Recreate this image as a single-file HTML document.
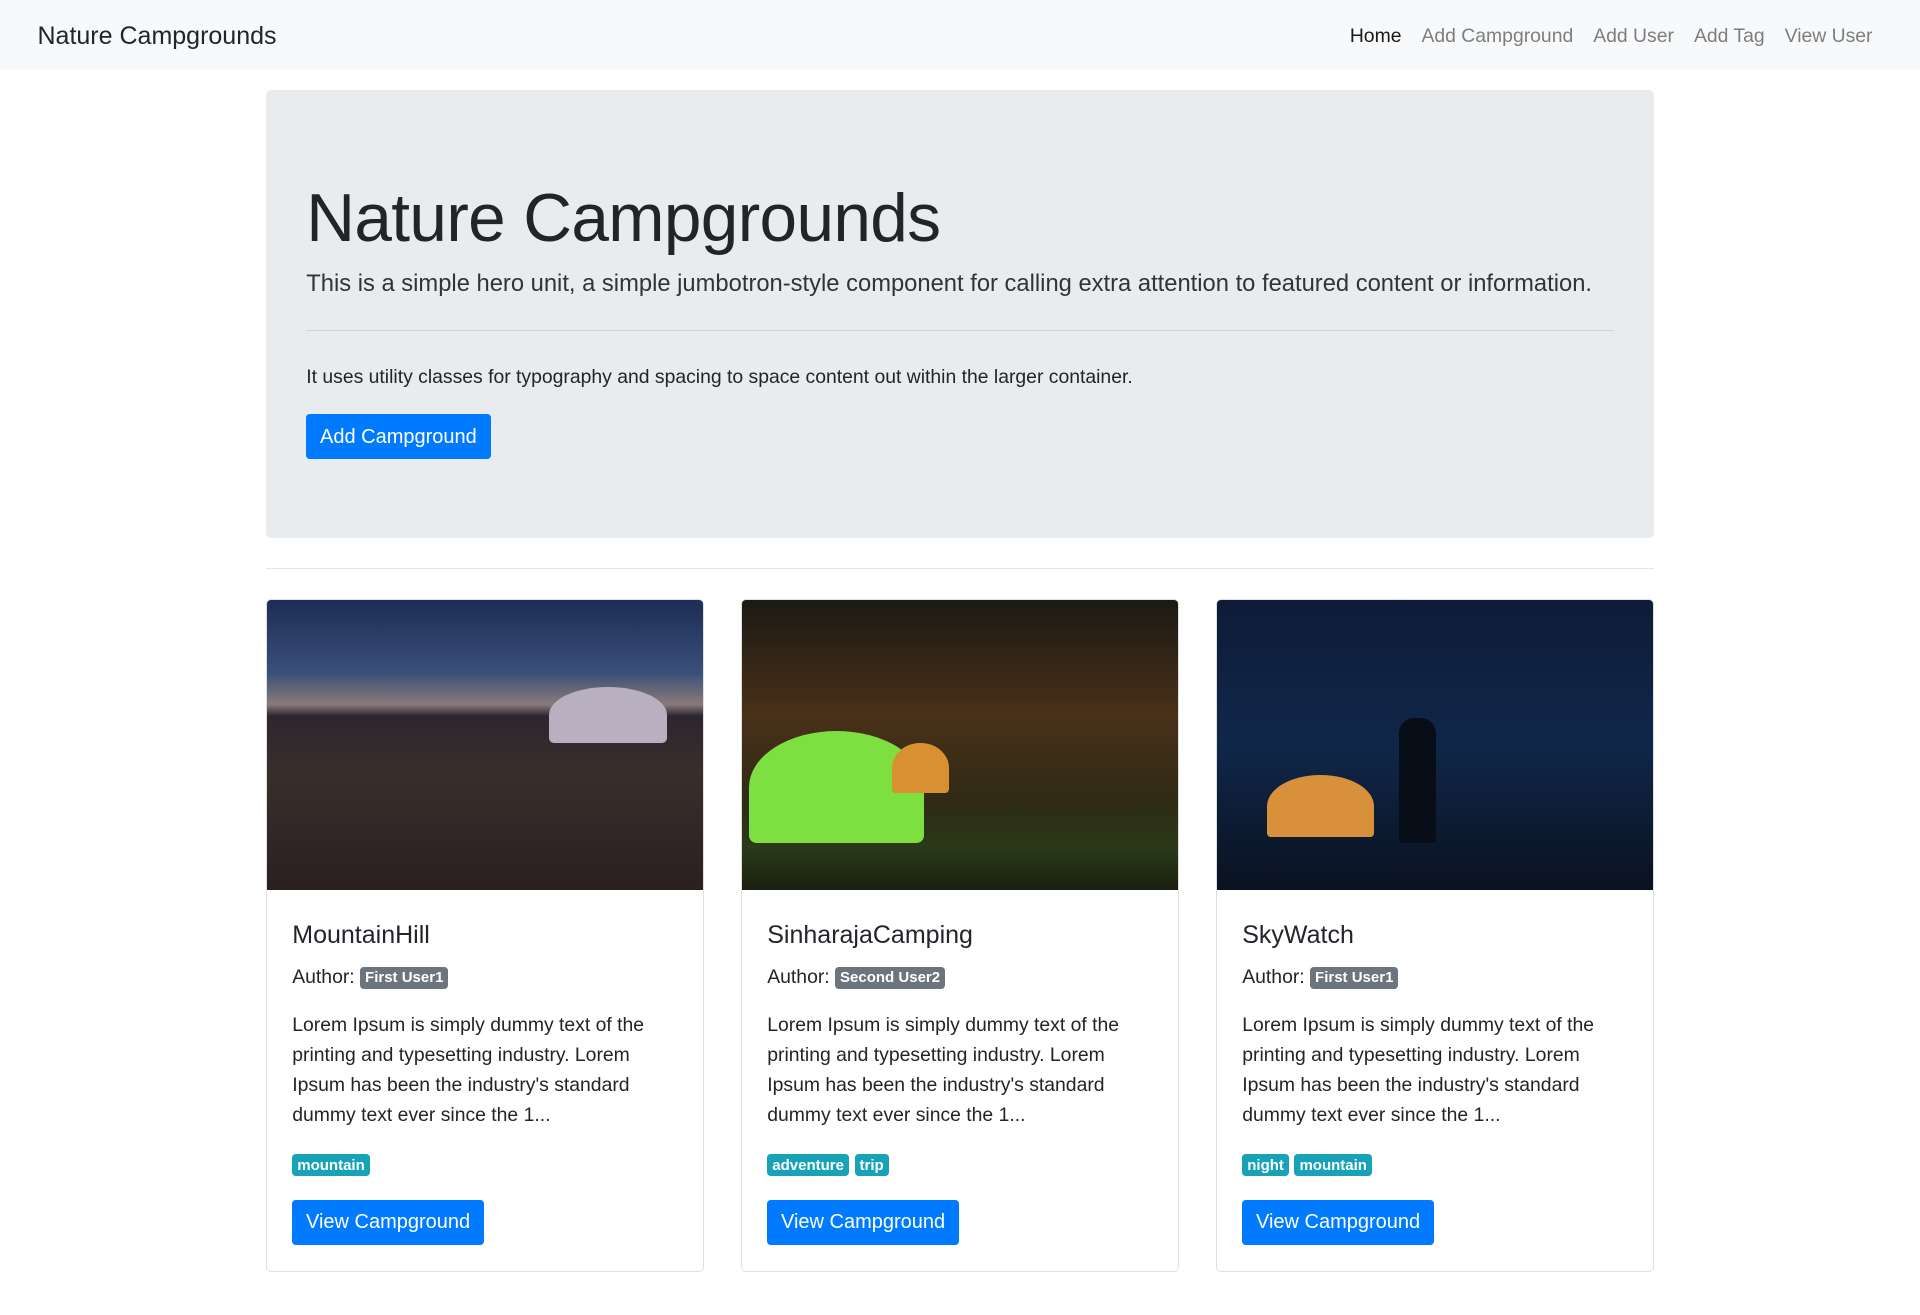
<!DOCTYPE html>
<html><head><meta charset="utf-8"><style>
html{zoom:1.25}
body{margin:0;font-family:"Liberation Sans",Arial,sans-serif;font-size:16px;line-height:1.5;color:#212529;background:#fff}
.nav{height:56px;background:#f8f9fa;display:flex;align-items:center;justify-content:space-between;padding:2px 16px 0;box-sizing:border-box}
.brand{font-size:20px;color:#212529;margin-left:14px}
.links{display:flex;margin-right:14px}
.links span{padding:0 8px;color:rgba(0,0,0,.5);font-size:15.5px}
.links span:first-child{color:rgba(0,0,0,.9)}
.container{width:1110px;margin:16px auto 0}
.jumbo{background:#e9ecef;border-radius:4px;padding:70px 32px 0;height:358px;box-sizing:border-box}
h1{font-size:54px;font-weight:300;line-height:1.2;margin:0 0 6px;letter-spacing:-0.5px}
.lead{font-size:19px;font-weight:300;margin:0;color:#333;white-space:nowrap}
.jumbo hr{border:0;border-top:1px solid rgba(0,0,0,.1);margin:23px 0 25px}
.jumbo p.t{margin:0 0 18px;font-size:15.5px}
.btn{display:inline-block;background:#007bff;color:#fff;border-radius:3px;padding:6px 11px;font-size:16px;line-height:1.5}
.sep{border:0;border-top:1px solid rgba(0,0,0,.1);margin:24px 0 24px}
.row{display:flex;gap:30px}
.card{width:350px;height:539px;border:1px solid rgba(0,0,0,.125);border-radius:4px;box-sizing:border-box;overflow:hidden}
.img{height:232px}
.body{padding:24px 20px 20px}
.body h5{font-size:20px;font-weight:500;margin:0 0 11px;line-height:1.2}
.auth{margin:0 0 14px;font-size:15.5px}
.badge{display:inline-block;font-size:12px;font-weight:700;color:#fff;border-radius:3px;padding:1px 4px;line-height:1.3;vertical-align:1px}
.sec{background:#6c757d}.info{background:#17a2b8}
.txt{font-size:15.5px;line-height:1.55;margin:0 0 16px}
.tags{margin-bottom:16px}
</style></head><body>
<div class="nav"><div class="brand">Nature Campgrounds</div>
<div class="links"><span>Home</span><span>Add Campground</span><span>Add User</span><span>Add Tag</span><span>View User</span></div></div>
<div class="container">
<div class="jumbo">
<h1>Nature Campgrounds</h1>
<p class="lead">This is a simple hero unit, a simple jumbotron-style component for calling extra attention to featured content or information.</p>
<hr>
<p class="t">It uses utility classes for typography and spacing to space content out within the larger container.</p>
<span class="btn">Add Campground</span>
</div>
<hr class="sep">
<div class="row">
<div class="card"><div class="img" style="background:linear-gradient(180deg,#1d2d55 0%,#3a4f78 25%,#8a7a7a 36%,#2c2630 40%,#3a2e2c 60%,#2a2020 100%);position:relative"><div style="position:absolute;left:225px;top:70px;width:95px;height:45px;background:#b8b0c0;border-radius:50% 50% 4px 4px"></div></div>
<div class="body"><h5>MountainHill</h5><p class="auth">Author: <span class="badge sec">First User1</span></p>
<p class="txt">Lorem Ipsum is simply dummy text of the printing and typesetting industry. Lorem Ipsum has been the industry's standard dummy text ever since the 1...</p>
<div class="tags"><span class="badge info">mountain</span></div><span class="btn">View Campground</span></div></div>
<div class="card"><div class="img" style="background:linear-gradient(180deg,#1a1a14 0%,#4a3018 40%,#2e2a16 70%,#2a3a18 85%,#1a2010 100%);position:relative"><div style="position:absolute;left:5px;top:105px;width:140px;height:90px;background:#7de040;border-radius:50% 50% 6px 6px"></div><div style="position:absolute;left:120px;top:115px;width:45px;height:40px;background:#d89030;border-radius:50% 50% 3px 3px"></div></div>
<div class="body"><h5>SinharajaCamping</h5><p class="auth">Author: <span class="badge sec">Second User2</span></p>
<p class="txt">Lorem Ipsum is simply dummy text of the printing and typesetting industry. Lorem Ipsum has been the industry's standard dummy text ever since the 1...</p>
<div class="tags"><span class="badge info">adventure</span> <span class="badge info">trip</span></div><span class="btn">View Campground</span></div></div>
<div class="card"><div class="img" style="background:linear-gradient(180deg,#0e1c38 0%,#10274a 50%,#0c1a30 80%,#0a1220 100%);position:relative"><div style="position:absolute;left:40px;top:140px;width:85px;height:50px;background:#d8903a;border-radius:50% 50% 3px 3px"></div><div style="position:absolute;left:145px;top:95px;width:30px;height:100px;background:#080e18;border-radius:12px 12px 2px 2px"></div></div>
<div class="body"><h5>SkyWatch</h5><p class="auth">Author: <span class="badge sec">First User1</span></p>
<p class="txt">Lorem Ipsum is simply dummy text of the printing and typesetting industry. Lorem Ipsum has been the industry's standard dummy text ever since the 1...</p>
<div class="tags"><span class="badge info">night</span> <span class="badge info">mountain</span></div><span class="btn">View Campground</span></div></div>
</div></div>
</body></html>
